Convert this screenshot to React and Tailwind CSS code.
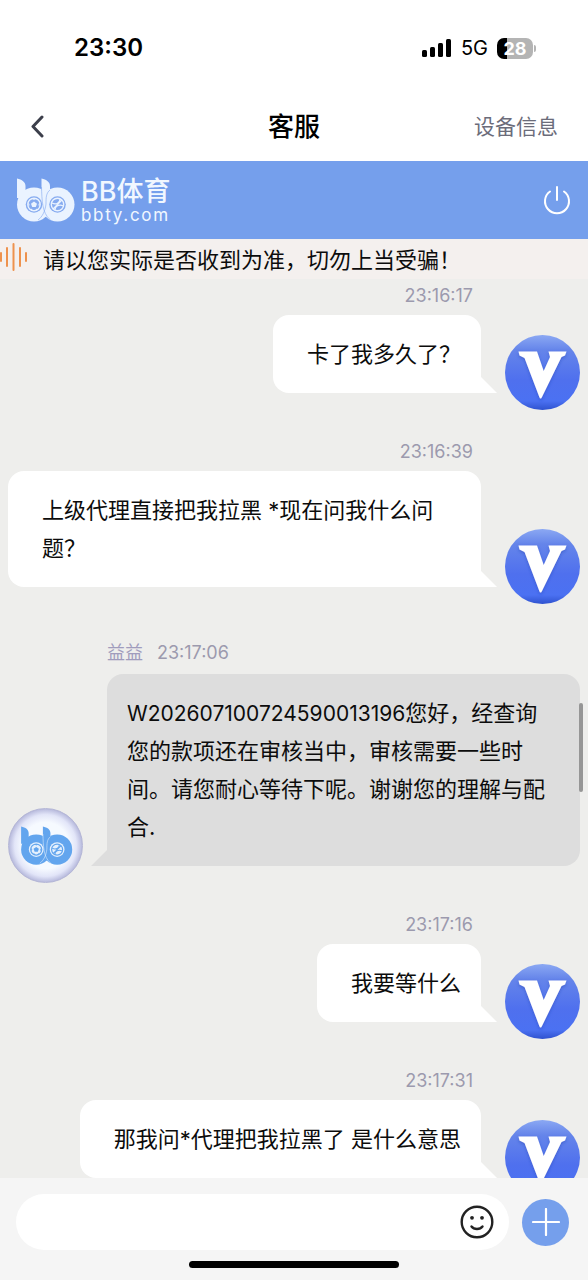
import React from "react";

function Logo({ className, tone, detail }) {
  return (
    <svg viewBox="0 0 60 45" className={className} fill="none" aria-hidden="true">
      <circle cx="19" cy="26.500" r="17" fill={tone} />
      <circle cx="42.500" cy="26.500" r="17" fill={tone} />
      <path d="M2 0.500 C7 1.500 10.500 4 10.500 8 V20 H2 Z M26.500 0.500 C31.500 1.500 35 4 35 8 V20 H26.500 Z" fill={tone} />
      <path d="M26.500 9 C27 22 27 35 35 41.500 M35 12 C31 15 31 20 31 26 C30 34 27 39 23 42" stroke={detail} strokeWidth="0.900" opacity="0.700" />
      <circle cx="19" cy="26.500" r="8.300" fill={detail} />
      <circle cx="42.500" cy="26.500" r="8.300" fill={detail} />
      <circle cx="19" cy="26.500" r="6.200" stroke={tone} strokeWidth="1.400" />
      <path d="M19 23.500 L22 25.700 L20.800 29 H17.200 L16 25.700 Z M17 20.500 L19 22 L21 20.500 Z M13 25 L14.500 26 L14 29 Z M25 25 L23.500 26 L24 29 Z M15.800 32 L16.500 30.500 L18 32.500 Z M22.200 32 L21.500 30.500 L20 32.500 Z" fill={tone} />
      <circle cx="42.500" cy="26.500" r="6.200" stroke={tone} strokeWidth="1.400" />
      <path d="M38 31 L47 22 M37 25 C41 27 45 25 45 21 M40 32 C40 28 44 26 48.500 28" stroke={tone} strokeWidth="1.200" />
    </svg>
  );
}

function UserAvatar() {
  return (
    <svg viewBox="0 0 75 75" className="size-[75px] shrink-0" role="img" aria-label="V">
      <defs>
        <linearGradient id="userDisc" x1="0" y1="0" x2="0" y2="1">
          <stop offset="0" stopColor="#8ba8f3" />
          <stop offset="0.2" stopColor="#6585ea" />
          <stop offset="0.6" stopColor="#4f70ee" />
          <stop offset="0.88" stopColor="#4b71f2" />
          <stop offset="1" stopColor="#2f52cf" />
        </linearGradient>
        <filter id="userShade" x="-20%" y="-20%" width="140%" height="140%">
          <feDropShadow dx="0" dy="1.500" stdDeviation="1.500" floodColor="#2440b4" floodOpacity="0.5" />
        </filter>
      </defs>
      <circle cx="37.500" cy="37.500" r="37.500" fill="url(#userDisc)" />
      <path d="M13.500 16.500 H32 L38.700 36 L45 22 L43.500 16.500 H61.500 L60 20.500 L56.500 22 L37 62 Q35.500 65 34.300 62 L19.500 23 L14.500 20.500 Z" fill="#fff" filter="url(#userShade)" />
    </svg>
  );
}

function AgentAvatar() {
  return (
    <div className="flex size-[75px] shrink-0 items-center justify-center rounded-full border border-[#b4b6d6] bg-radial from-[#f6faff] from-45% via-[#e2e5f8] via-60% to-[#a9abd3] to-75%">
      <Logo className="h-10 w-[54px]" tone="#62a5ee" detail="#e4f0fd" />
    </div>
  );
}

function UserMessage({ time, children }) {
  return (
    <article>
      <time className="mb-[7px] block h-6 pr-[107px] text-right text-[18px] leading-6 text-[#9c9aae]">{time}</time>
      <div className="flex items-end justify-end gap-6">
        <div className="relative mb-[17px] rounded-2xl rounded-br-none bg-white py-5 pr-5 pl-[34px]">
          <p className="text-[22px] leading-[38px]">{children}</p>
          <svg viewBox="0 0 16 16" className="absolute bottom-0 left-full size-4" aria-hidden="true">
            <path d="M0 0 L16 16 H0 Z" fill="#fff" />
          </svg>
        </div>
        <UserAvatar />
      </div>
    </article>
  );
}

function AgentMessage({ name, time, children }) {
  return (
    <article>
      <header className="mb-1 flex h-9 items-center gap-[14px] pl-[99px] text-[18px] text-[#9c9aae]">
        <span className="text-[#a09cbd]">{name}</span>
        <time>{time}</time>
      </header>
      <div className="flex items-end gap-6">
        <AgentAvatar />
        <div className="relative mb-[17px] min-w-0 flex-1 rounded-2xl rounded-bl-none bg-[#dddddd] py-5 pr-[34px] pl-5">
          <p className="text-[22px] leading-[38px]">{children}</p>
          <svg viewBox="0 0 16 16" className="absolute right-full bottom-0 size-4" aria-hidden="true">
            <path d="M16 0 L0 16 H16 Z" fill="#dddddd" />
          </svg>
        </div>
      </div>
    </article>
  );
}

function StatusBar() {
  return (
    <div className="flex h-24 items-center justify-between pr-[52px] pl-[74px]">
      <span className="text-[24px] font-semibold">23:30</span>
      <div className="flex items-center gap-[9px]">
        <svg viewBox="0 0 30 18" className="h-[18px] w-[30px]" aria-hidden="true">
          <rect x="0" y="11" width="5" height="7" rx="1.500" />
          <rect x="8" y="8" width="5" height="10" rx="1.500" />
          <rect x="16" y="4" width="5" height="14" rx="1.500" />
          <rect x="24" y="0" width="5" height="18" rx="1.500" />
        </svg>
        <span className="text-[20px]">5G</span>
        <div className="flex items-center gap-px">
          <div className="flex h-[21px] w-9 items-center justify-center rounded-[7px] bg-linear-to-r from-black from-28% to-[#b4b4b4] to-28% text-[18px] font-bold text-white">28</div>
          <span className="h-[7px] w-0.5 rounded-r-full bg-[#b4b4b4]" />
        </div>
      </div>
    </div>
  );
}

export default function App() {
  return (
    <div className="flex h-screen flex-col overflow-hidden bg-[#eeeeec] font-[Inter,'Noto_Sans_CJK_SC',sans-serif] text-[#0c0c0c]">
      <div className="shrink-0 bg-white text-black">
        <StatusBar />
        <header className="grid h-[65px] grid-cols-3 items-center px-[30px] pb-1">
          <button type="button" aria-label="返回" className="justify-self-start">
            <svg viewBox="0 0 14 24" className="h-6 w-[14px]" fill="none" stroke="#3c3f4b" strokeWidth="3" strokeLinecap="round" strokeLinejoin="round">
              <path d="M12 2 L3 11.500 L12 21" />
            </svg>
          </button>
          <h1 className="text-center text-[26px] font-medium">客服</h1>
          <button type="button" className="justify-self-end text-[21px] text-[#6b6c7a]">设备信息</button>
        </header>
      </div>

      <div className="flex h-[78px] shrink-0 items-center justify-between bg-[#759fec] pr-[17px] pl-[15px] text-white">
        <div className="flex items-center gap-[6px]">
          <Logo className="h-[45px] w-[60px]" tone="#eaf3ff" detail="#86abf0" />
          <div className="text-[#f1f7ff]">
            <div className="text-[27px] leading-[30px] font-medium">BB体育</div>
            <div className="text-[17px] leading-4 tracking-widest">bbty.com</div>
          </div>
        </div>
        <button type="button" aria-label="退出">
          <svg viewBox="0 0 28 30" className="h-[30px] w-7" fill="none" stroke="#fff" strokeWidth="2" strokeLinecap="round">
            <path d="M14 2 V15 M7 6.500 A12 12 0 1 0 21 6.500" />
          </svg>
        </button>
      </div>

      <div className="flex h-10 shrink-0 items-center gap-[15px] bg-[#f4f0ee]">
        <svg viewBox="0 0 28 30" className="-mt-1 h-[30px] w-7" fill="none" stroke="#ee924d" strokeWidth="2" strokeLinecap="round" aria-hidden="true">
          <path d="M1 11 V19 M7 6 V24 M13.500 2 V28 M20 6 V24 M26 11 V19" />
        </svg>
        <p className="pt-0.5 text-[22px]">请以您实际是否收到为准，切勿上当受骗！</p>
      </div>

      <div className="relative min-h-0 flex-1">
        <main className="flex h-full flex-col gap-[30px] overflow-y-auto px-2 pt-[5px] [scrollbar-width:none]">
          <UserMessage time="23:16:17">卡了我多久了？</UserMessage>
          <UserMessage time="23:16:39">上级代理直接把我拉黑 *现在问我什么问题？</UserMessage>
          <AgentMessage name="益益" time="23:17:06">
            <span className="text-[21px] leading-none">W202607100724590013196</span>您好，经查询您的款项还在审核当中，审核需要一些时间。请您耐心等待下呢。谢谢您的理解与配合.
          </AgentMessage>
          <UserMessage time="23:17:16">我要等什么</UserMessage>
          <UserMessage time="23:17:31">那我问*代理把我拉黑了 是什么意思</UserMessage>
        </main>
        <span className="absolute top-[424px] right-[5px] h-[89px] w-1 rounded-full bg-[#969696]" />
      </div>

      <footer className="shrink-0 bg-[#f5f5f5] pt-4 pb-3">
        <form className="flex items-center gap-[13px] pr-[19px] pl-4">
          <div className="flex h-14 min-w-0 flex-1 items-center rounded-full bg-white pr-[15px] pl-6">
            <input type="text" aria-label="消息" className="min-w-0 flex-1 bg-transparent text-[22px] outline-none" />
            <button type="button" aria-label="表情">
              <svg viewBox="0 0 34 34" className="size-[34px]" fill="none" stroke="#222" strokeWidth="2.400" strokeLinecap="round">
                <circle cx="17" cy="17" r="15.300" />
                <path d="M11.500 21.500 C14 24.800 20 24.800 22.500 21.500" />
                <circle cx="12" cy="12.800" r="1.900" fill="#222" stroke="none" />
                <circle cx="22" cy="12.800" r="1.900" fill="#222" stroke="none" />
              </svg>
            </button>
          </div>
          <button type="button" aria-label="更多" className="flex size-[47px] shrink-0 items-center justify-center rounded-full bg-[#759fec]">
            <svg viewBox="0 0 28 28" className="size-7" stroke="#fff" strokeWidth="2.200" strokeLinecap="round">
              <path d="M14 1 V27 M1 14 H27" />
            </svg>
          </button>
        </form>
        <div className="mx-auto mt-[11px] h-[7px] w-[210px] rounded-full bg-black" />
      </footer>
    </div>
  );
}
